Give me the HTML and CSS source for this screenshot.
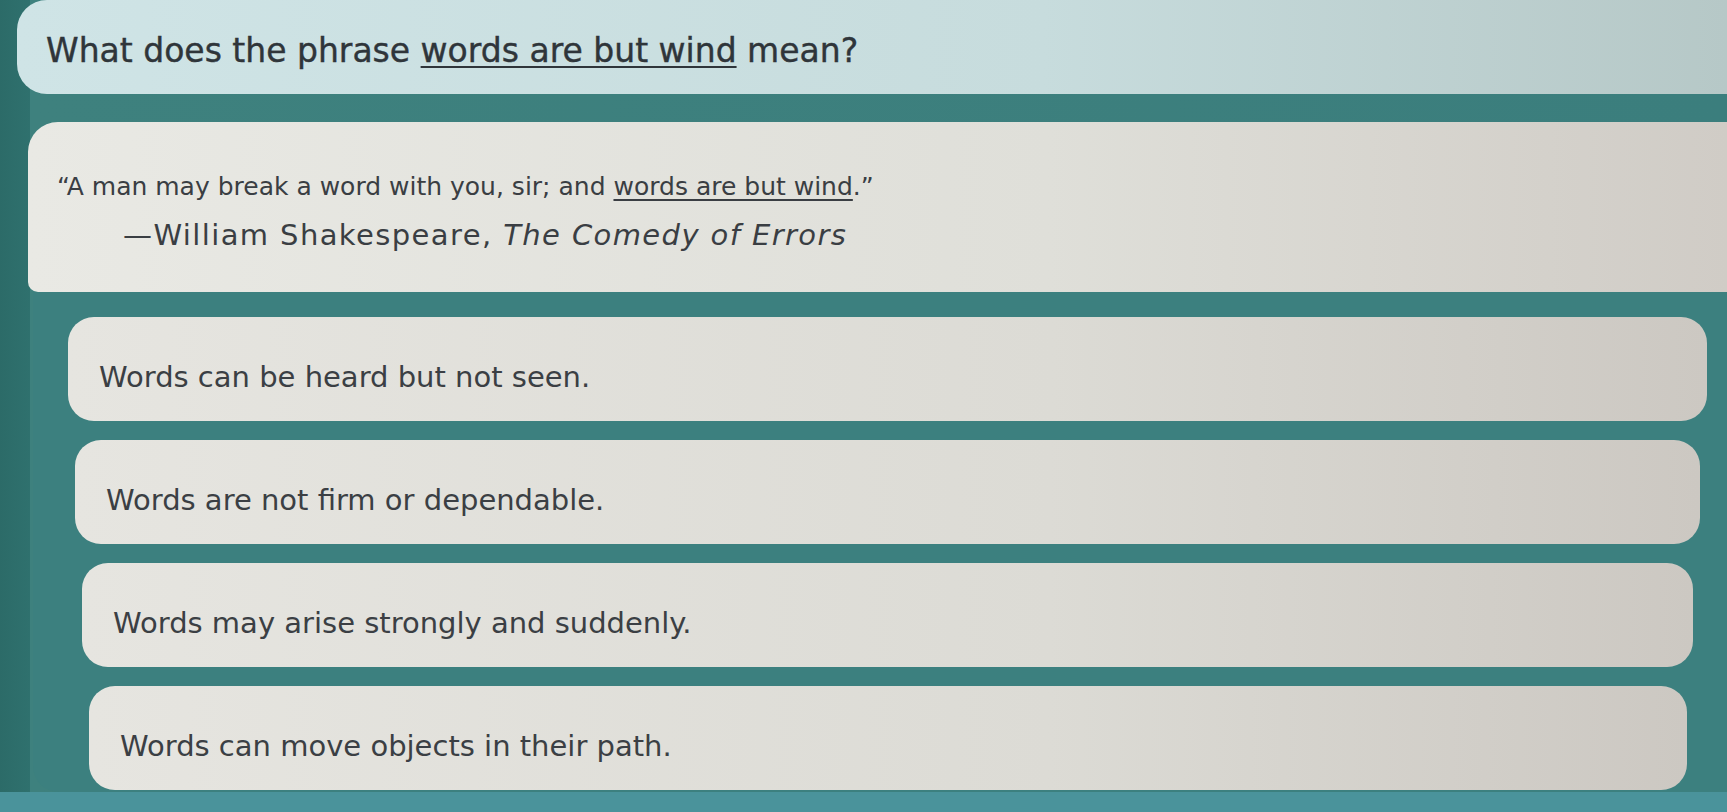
FILE: index.html
```html
<!DOCTYPE html>
<html lang="en">
<head>
  <meta charset="UTF-8" />
  <meta name="viewport" content="width=device-width, initial-scale=1.0"/>
  <title>Reading Question</title>
  <link rel="stylesheet" href="styles.css">
</head>
<body>

  <div class="screen">
    <div class="question">
      <span>What does the phrase <u>words are but wind</u> mean?</span>
    </div>

    <div class="passage">
      <p class="quote">“A man may break a word with you, sir; and <u>words are but wind</u>.”</p>
      <p class="cite">—William Shakespeare, <i>The Comedy of Errors</i></p>
    </div>

    <div class="choices">
      <div class="choice">Words can be heard but not seen.</div>
      <div class="choice">Words are not firm or dependable.</div>
      <div class="choice">Words may arise strongly and suddenly.</div>
      <div class="choice">Words can move objects in their path.</div>
    </div>
  </div>

</body>
</html>
```

FILE: styles.css
```css
* {
  box-sizing: border-box;
}

body {
  margin: 0;
  padding: 0;
  height: 812px;
  overflow: hidden;
  font-family: "DejaVu Sans", "Open Sans", sans-serif;
  color: #3a3e43;
  background:
    linear-gradient(180deg, transparent 792px, #4a939b 792px),
    linear-gradient(90deg, #2c6b68 0, #2f716e 30px, #3e817e 30px, #3b7e7d 100%);
}

.screen {
  height: 100%;
  display: flex;
  flex-direction: column;
}

u {
  text-decoration-thickness: 2px;
  text-underline-offset: 4px;
}

/* top prompt bar */
.question {
  height: 94px;
  margin-left: 17px;
  padding: 6px 0 0 29px;
  display: flex;
  align-items: center;
  font-size: 33px;
  color: #2f353a;
  -webkit-text-stroke: 0.4px #2f353a;
  background: linear-gradient(90deg, #cfe4e6 0%, #c7dcdd 60%, #b6c8c7 100%);
  border-radius: 30px 0 0 30px;
}

/* quote card */
.passage {
  margin: 28px 0 0 28px;
  padding: 41px 0 33px 29px;
  background: linear-gradient(90deg, #e9e9e4 0%, #dfdfd9 60%, #d0ccc6 100%);
  border-radius: 30px 0 0 10px;
}

.passage p {
  margin: 0;
  line-height: 48px;
}

.quote {
  font-size: 25px;
}

.cite {
  padding-left: 66px;
  font-size: 29px;
  letter-spacing: 1.4px;
}

/* answer list */
.choices {
  flex: 1;
  margin: 0 0 20px 33px;
  padding: 25px 20px 0 35px;
  display: flex;
  flex-direction: column;
  gap: 19px;
  background: #3c807f;
  border-radius: 0 0 0 26px;
}

.choice {
  height: 104px;
  padding: 16px 0 0 31px;
  display: flex;
  align-items: center;
  font-size: 29px;
  color: #3b3f44;
  background: linear-gradient(90deg, #e6e5e0 0%, #dcdbd5 60%, #ccc8c2 100%);
  border-radius: 26px;
}

.choice:nth-child(2) { margin: 0 7px 0 7px; }
.choice:nth-child(3) { margin: 0 14px 0 14px; }
.choice:nth-child(4) { margin: 0 20px 0 21px; }
```
